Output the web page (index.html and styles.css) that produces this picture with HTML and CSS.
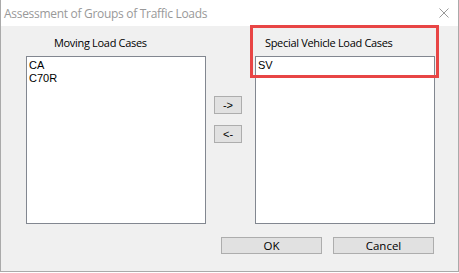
FILE: index.html
```html
<!DOCTYPE html>
<html>
<head>
<meta charset="utf-8">
<link rel="stylesheet" href="styles.css">
</head>
<body>
<div class="window">
  <div class="titlebar">
    <span class="title">Assessment of Groups of Traffic Loads</span>
    <svg class="close" width="10" height="10" viewBox="0 0 10 10"><path d="M0.5 0.5 L9.5 9.5 M9.5 0.5 L0.5 9.5" stroke="#999" stroke-width="1" fill="none"/></svg>
  </div>
  <div class="content">
    <div class="lists">
      <div class="col">
        <div class="label label-left">Moving Load Cases</div>
        <div class="listbox">
          <div class="item">CA</div>
          <div class="item">C70R</div>
        </div>
      </div>
      <div class="mid">
        <button class="btn arrow">-&gt;</button>
        <button class="btn arrow">&lt;-</button>
      </div>
      <div class="col">
        <div class="label label-right">Special Vehicle Load Cases</div>
        <div class="listbox">
          <div class="item">SV</div>
        </div>
      </div>
    </div>
    <div class="actions">
      <button class="btn action">OK</button>
      <button class="btn action">Cancel</button>
    </div>
  </div>
  <div class="highlight"></div>
</div>
</body>
</html>
```
FILE: styles.css
```css
html, body {
  margin: 0;
  padding: 0;
  background: #ffffff;
}
body {
  width: 459px;
  height: 273px;
  overflow: hidden;
}
.window {
  position: relative;
  box-sizing: border-box;
  width: 459px;
  height: 272px;
  border-left: 1px solid #aaaaaa;
  border-right: 1px solid #aaaaaa;
  border-bottom: 1px solid #aaaaaa;
  background: #f0f0f0;
  display: flex;
  flex-direction: column;
  font-family: "Open Sans", "Noto Sans", sans-serif;
}
.titlebar {
  height: 26px;
  background: #ffffff;
  display: flex;
  align-items: center;
  justify-content: space-between;
  padding: 0 9px 0 3px;
}
.title {
  font-size: 12px;
  color: #999999;
  letter-spacing: -0.3px;
}
.close {
  display: block;
}
.content {
  flex: 1;
  display: flex;
  flex-direction: column;
}
.lists {
  display: flex;
  padding-left: 25px;
}
.col {
  width: 180px;
  display: flex;
  flex-direction: column;
}
.label {
  height: 30px;
  box-sizing: border-box;
  padding-top: 9px;
  font-size: 11px;
  line-height: 16px;
  color: #000;
  white-space: nowrap;
  letter-spacing: -0.32px;
}
.label-left { padding-left: 28px; }
.label-right { padding-left: 10px; }
.listbox {
  box-sizing: border-box;
  height: 168px;
  background: #fff;
  border: 1px solid #828790;
  padding: 2px 2px;
  font-family: "Liberation Sans", Arial, sans-serif;
  font-size: 11px;
  line-height: 13px;
  color: #000;
}
.mid {
  width: 49px;
  box-sizing: border-box;
  padding-left: 8px;
  padding-top: 70px;
  display: flex;
  flex-direction: column;
  gap: 11px;
}
.btn {
  box-sizing: border-box;
  margin: 0;
  padding: 0;
  background: #e1e1e1;
  border: 1px solid #adadad;
  color: #000;
  font-family: "Open Sans", "Noto Sans", sans-serif;
  font-size: 12px;
}
.arrow {
  width: 28px;
  height: 18px;
  font-size: 11px;
  line-height: 14px;
  font-family: "Liberation Sans", Arial, sans-serif;
}
.actions {
  display: flex;
  justify-content: flex-end;
  gap: 11px;
  padding-right: 24px;
  margin-top: 13px;
}
.action {
  width: 101px;
  height: 17px;
  line-height: 14px;
  font-size: 11.5px;
}
.highlight {
  position: absolute;
  left: 249px;
  top: 25px;
  width: 189px;
  height: 53px;
  box-sizing: border-box;
  border: 3px solid #e84545;
}
```
